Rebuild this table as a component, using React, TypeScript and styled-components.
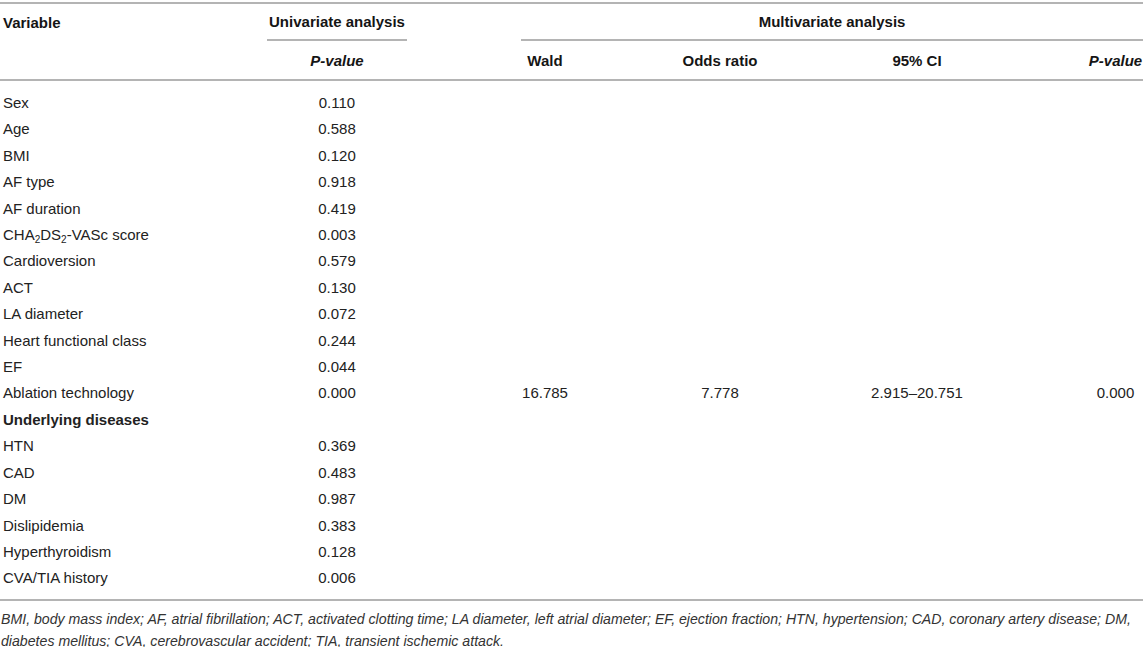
import React from "react";
import styled, { createGlobalStyle } from "styled-components";

const GlobalStyle = createGlobalStyle`
  html, body {
    margin: 0;
    padding: 0;
    background: #ffffff;
  }
  body {
    font-family: "Liberation Sans", Arial, sans-serif;
    color: #222222;
  }
`;

interface Row {
  label: React.ReactNode;
  p?: string;
  wald?: string;
  odds?: string;
  ci?: string;
  mp?: string;
  group?: boolean;
}

const rows: Row[] = [
  { label: "Sex", p: "0.110" },
  { label: "Age", p: "0.588" },
  { label: "BMI", p: "0.120" },
  { label: "AF type", p: "0.918" },
  { label: "AF duration", p: "0.419" },
  {
    label: (
      <>
        CHA<sub>2</sub>DS<sub>2</sub>-VASc score
      </>
    ),
    p: "0.003",
  },
  { label: "Cardioversion", p: "0.579" },
  { label: "ACT", p: "0.130" },
  { label: "LA diameter", p: "0.072" },
  { label: "Heart functional class", p: "0.244" },
  { label: "EF", p: "0.044" },
  {
    label: "Ablation technology",
    p: "0.000",
    wald: "16.785",
    odds: "7.778",
    ci: "2.915–20.751",
    mp: "0.000",
  },
  { label: "Underlying diseases", group: true },
  { label: "HTN", p: "0.369" },
  { label: "CAD", p: "0.483" },
  { label: "DM", p: "0.987" },
  { label: "Dislipidemia", p: "0.383" },
  { label: "Hyperthyroidism", p: "0.128" },
  { label: "CVA/TIA history", p: "0.006" },
];

// column widths, spacer columns keep the multivariate values where they sit
const cols = [267, 140, 114, 48, 101, 100, 97, 100, 121, 55];

const Page = styled.div`
  padding-top: 2px;
  width: 1143px;
`;

const TableWrapper = styled.table`
  width: 1143px;
  table-layout: fixed;
  border-collapse: collapse;
  border-top: 2px solid #b4b4b4;
  border-bottom: 2px solid #b4b4b4;
`;

const Th = styled.th<{ $align?: string; $rule?: boolean; $h?: number }>`
  font-weight: 700;
  font-size: 15px;
  color: #151515;
  padding: 0;
  height: ${(p) => p.$h ?? 35}px;
  text-align: ${(p) => p.$align ?? "center"};
  vertical-align: middle;
  white-space: nowrap;
  border-bottom: ${(p) => (p.$rule ? "2px solid #b4b4b4" : "none")};
`;

const LabelTh = styled(Th)`
  padding-left: 3px;
`;

const HeadRow = styled.tr`
  &:last-child th {
    border-bottom: 2px solid #b4b4b4;
  }
`;

const Italic = styled.em`
  font-style: italic;
`;

const Tr = styled.tr`
  &:first-child td {
    padding-top: 9px;
  }
  &:last-child td {
    padding-bottom: 7px;
  }
`;

const Td = styled.td<{ $align?: string; $bold?: boolean }>`
  font-size: 15px;
  height: 26.4px;
  line-height: 26.4px;
  padding: 0;
  white-space: nowrap;
  color: #222222;
  font-weight: ${(p) => (p.$bold ? 700 : 400)};
  text-align: ${(p) => p.$align ?? "center"};

  sub {
    font-size: 10px;
    line-height: 0;
    vertical-align: -3px;
  }
`;

const LabelTd = styled(Td)`
  padding-left: 3px;
`;

const Footnote = styled.p`
  margin: 0;
  padding: 7px 0 0 1px;
  font-size: 14.15px;
  line-height: 22px;
  font-style: italic;
  color: #333333;
`;

export default function App() {
  return (
    <Page>
      <GlobalStyle />
      <TableWrapper>
        <colgroup>
          {cols.map((w, i) => (
            <col key={i} style={{ width: w }} />
          ))}
        </colgroup>
        <thead>
          <HeadRow>
            <LabelTh $align="left">Variable</LabelTh>
            <Th $rule>Univariate analysis</Th>
            <Th />
            <Th colSpan={7} $rule>
              Multivariate analysis
            </Th>
          </HeadRow>
          <HeadRow>
            <Th $h={38} />
            <Th $h={38}>
              <Italic>P-value</Italic>
            </Th>
            <Th $h={38} />
            <Th $h={38}>Wald</Th>
            <Th $h={38} />
            <Th $h={38}>Odds ratio</Th>
            <Th $h={38} />
            <Th $h={38}>95% CI</Th>
            <Th $h={38} />
            <Th $h={38}>
              <Italic>P-value</Italic>
            </Th>
          </HeadRow>
        </thead>
        <tbody>
          {rows.map((row, i) => (
            <Tr key={i}>
              <LabelTd $align="left" $bold={row.group}>
                {row.label}
              </LabelTd>
              <Td>{row.p}</Td>
              <Td />
              <Td>{row.wald}</Td>
              <Td />
              <Td>{row.odds}</Td>
              <Td />
              <Td>{row.ci}</Td>
              <Td />
              <Td>{row.mp}</Td>
            </Tr>
          ))}
        </tbody>
      </TableWrapper>
      <Footnote>
        BMI, body mass index; AF, atrial fibrillation; ACT, activated clotting
        time; LA diameter, left atrial diameter; EF, ejection fraction; HTN,
        hypertension; CAD, coronary artery disease; DM, diabetes mellitus; CVA,
        cerebrovascular accident; TIA, transient ischemic attack.
      </Footnote>
    </Page>
  );
}
